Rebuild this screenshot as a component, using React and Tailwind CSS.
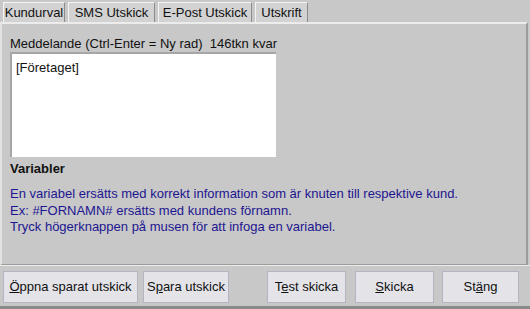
import React from 'react';

const tabs = [
  { label: 'Kundurval', w: 'w-[62px]' },
  { label: 'SMS Utskick', w: 'w-[87px]' },
  { label: 'E-Post Utskick', w: 'w-[94px]' },
  { label: 'Utskrift', w: 'w-[53px]' },
];

const Btn = ({ w, children }) => (
  <button
    type="button"
    className={`${w} h-[32px] bg-[#e3e3e8] border border-[#b3b6c2] text-[13px] text-[#111] flex items-center justify-center`}
  >
    {children}
  </button>
);

const App = () => {
  return (
    <div
      className="w-[530px] h-[309px] bg-[#c8c8c8] flex flex-col overflow-hidden text-[13px] text-[#111]"
      style={{ fontFamily: '"Liberation Sans", Arial, sans-serif' }}
    >
      {/* Tabs */}
      <div className="h-[22px] pt-[2px] pl-[3px] flex gap-[3px] shrink-0">
        {tabs.map((t) => (
          <div
            key={t.label}
            className={`${t.w} h-[20px] bg-[#d2d2d2] border-t border-l border-[#f4f4f4] border-r border-r-[#8c8c8c] flex items-center justify-center leading-none`}
          >
            {t.label}
          </div>
        ))}
      </div>

      {/* Panel */}
      <div className="h-[243px] w-[528px] shrink-0 border-t-2 border-t-[#ececec] border-l-2 border-l-[#e2e2e2] border-r-2 border-r-[#9c9c9c] border-b border-b-[#9c9c9c] pl-[8px] pt-[12px]">
        <div className="leading-[16px]">Meddelande (Ctrl-Enter = Ny rad)&nbsp;&nbsp;146tkn kvar</div>
        <div className="w-[266px] h-[105px] bg-white border-t-2 border-l-2 border-[#a6a6a6] pl-[4px] pt-[6px] leading-[16px]">
          [Företaget]
        </div>
        <div className="font-bold mt-[4px] leading-[16px]">Variabler</div>
        <div className="text-[#1d1690] mt-[9px] leading-[16.5px]">
          <div>En variabel ersätts med korrekt information som är knuten till respektive kund.</div>
          <div>Ex: #FORNAMN# ersätts med kundens förnamn.</div>
          <div>Tryck högerknappen på musen för att infoga en variabel.</div>
        </div>
      </div>

      {/* Buttons */}
      <div className="flex-1 border-t border-t-[#ececec] pt-[5px] pl-[3px] flex">
        <Btn w="w-[135px]"><span><span className="underline">Ö</span>ppna sparat utskick</span></Btn>
        <div className="ml-[5px]">
          <Btn w="w-[86px]"><span>S<span className="underline">p</span>ara utskick</span></Btn>
        </div>
        <div className="ml-[38px]">
          <Btn w="w-[79px]"><span>T<span className="underline">e</span>st skicka</span></Btn>
        </div>
        <div className="ml-[9px]">
          <Btn w="w-[79px]"><span><span className="underline">S</span>kicka</span></Btn>
        </div>
        <div className="ml-[8px]">
          <Btn w="w-[77px]"><span>St<span className="underline">ä</span>ng</span></Btn>
        </div>
      </div>
      <div className="h-[3px] bg-[#8a8a8a] shrink-0" />
    </div>
  );
};

export default App;
